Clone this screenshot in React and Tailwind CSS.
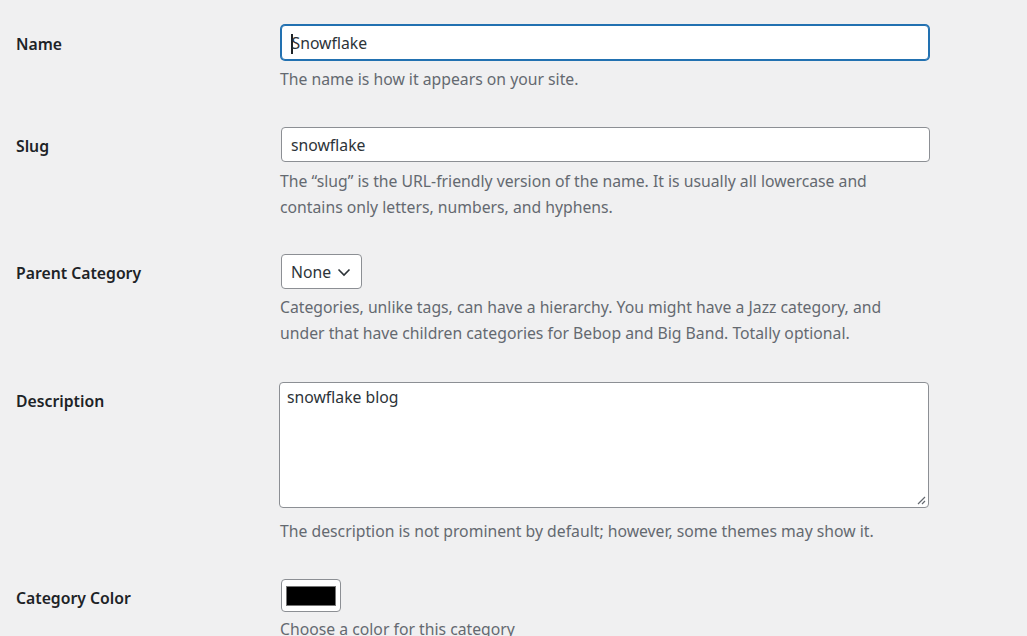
import React from "react";

const font = { fontFamily: '"Noto Sans", "Open Sans", sans-serif' };

function Row({ label, labelPt, children, mb }) {
  return (
    <div className={`flex ${mb}`}>
      <div className={`w-[280px] shrink-0 pl-4 ${labelPt} text-[15.75px] leading-[26px] font-semibold text-[#1d2327]`}>
        {label}
      </div>
      <div className="flex-1">{children}</div>
    </div>
  );
}

function Desc({ children, mt }) {
  return (
    <p className={`${mt} text-[15.75px] leading-[26px] text-[#646970] w-[620px]`}>{children}</p>
  );
}

export default function App() {
  return (
    <div className="w-[1027px] h-[636px] overflow-hidden bg-[#f0f0f1] pt-[25px]" style={font}>
      <Row label="Name" labelPt="pt-[6px]" mb="mb-[35px]">
        <div className="ml-[1px] w-[648px] h-[35px] rounded-[4px] border border-[#2271b1] ring-1 ring-[#2271b1] bg-white flex items-center pl-[9px] pt-[2px] text-[15.75px] text-[#2c3338]">
          <span className="w-[1.5px] h-[20px] bg-[#1d2327] -mr-[1px]"></span>
          Snowflake
        </div>
        <Desc mt="mt-[6px]">The name is how it appears on your site.</Desc>
      </Row>
      <Row label="Slug" labelPt="pt-[6px]" mb="mb-[34px]">
        <div className="ml-[1px] w-[649px] h-[35px] rounded-[4px] border border-[#8c8f94] bg-white flex items-center pl-[9px] pt-[2px] text-[15.75px] text-[#2c3338]">
          snowflake
        </div>
        <Desc mt="mt-[6px]">
          The “slug” is the URL-friendly version of the name. It is usually all lowercase and contains only letters, numbers, and hyphens.
        </Desc>
      </Row>
      <Row label="Parent Category" labelPt="pt-[6px]" mb="mb-[36px]">
        <div className="ml-[1px] w-[81px] h-[35px] rounded-[4px] border border-[#8c8f94] bg-white flex items-center pl-[9px] pt-[2px] gap-[6px] text-[15.75px] text-[#2c3338]">
          None
          <svg width="14" height="9" viewBox="0 0 14 9" fill="none">
            <path d="M1.5 1.5 L7 7 L12.5 1.5" stroke="#2c3338" strokeWidth="1.6" />
          </svg>
        </div>
        <Desc mt="mt-[5px]">
          Categories, unlike tags, can have a hierarchy. You might have a Jazz category, and under that have children categories for Bebop and Big Band. Totally optional.
        </Desc>
      </Row>
      <Row label="Description" labelPt="pt-[6px]" mb="mb-[35px]">
        <div className="relative -ml-[1px] w-[650px] h-[126px] rounded-[4px] border border-[#8c8f94] bg-white pl-[7px] pt-[1px] text-[15.75px] leading-[26px] text-[#2c3338]">
          snowflake blog
          <svg className="absolute right-[2px] bottom-[2px]" width="10" height="10" viewBox="0 0 10 10">
            <path d="M9 2 L2 9 M9 6 L6 9" stroke="#646970" strokeWidth="1.2" />
          </svg>
        </div>
        <Desc mt="mt-[10px]">The description is not prominent by default; however, some themes may show it.</Desc>
      </Row>
      <Row label="Category Color" labelPt="pt-[6px]" mb="">
        <div className="ml-[1px] w-[60px] h-[33px] rounded-[4px] border border-[#8c8f94] bg-white flex items-center justify-center">
          <div className="w-[50px] h-[20px] bg-black border border-[#767676]"></div>
        </div>
        <Desc mt="mt-[4px]">Choose a color for this category</Desc>
      </Row>
    </div>
  );
}
